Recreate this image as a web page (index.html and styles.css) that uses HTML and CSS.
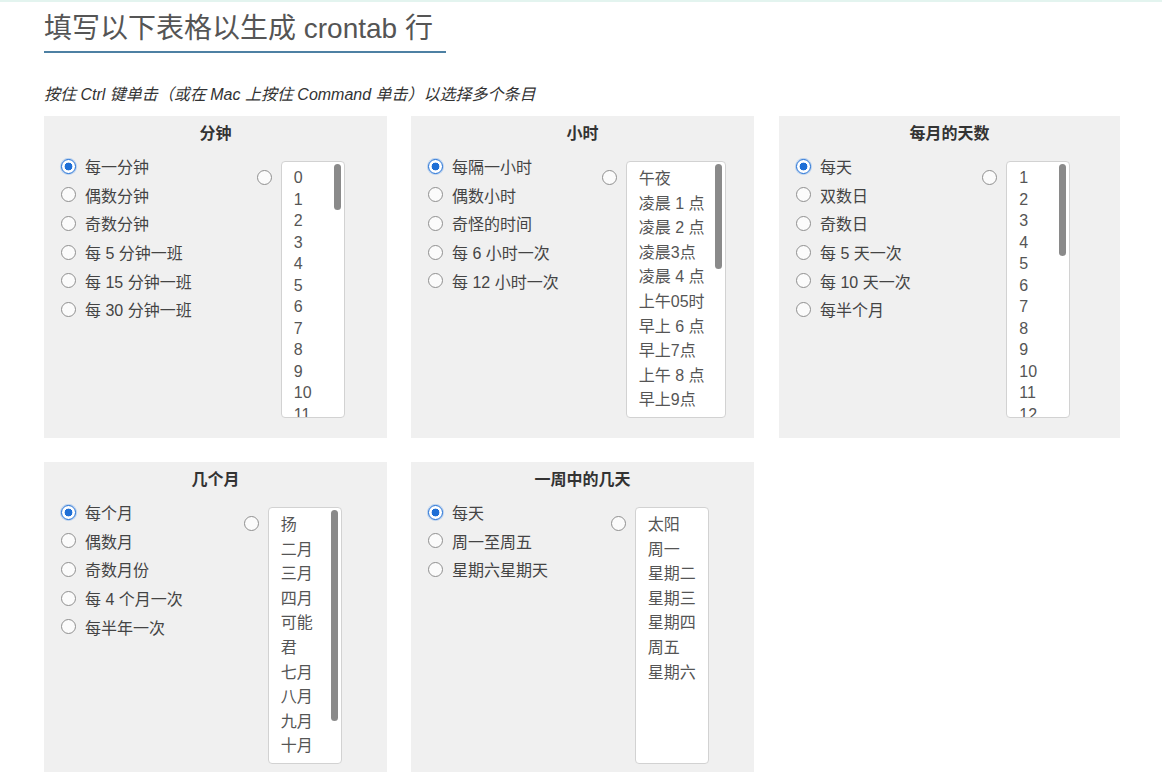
FILE: index.html
```html
<!DOCTYPE html>
<html lang="zh-CN">
<head>
<meta charset="utf-8">
<title>crontab 生成器</title>
<link rel="stylesheet" href="styles.css">
</head>
<body>
<div class="page">
  <h1 class="title">填写以下表格以生成 crontab 行</h1>
  <p class="hint">按住 Ctrl 键单击（或在 Mac 上按住 Command 单击）以选择多个条目</p>

  <div class="grid">
    <section class="panel">
      <h2 class="panel-title">分钟</h2>
      <div class="panel-body">
        <div class="choices">
          <label class="choice"><input type="radio" name="m" checked><span>每一分钟</span></label>
          <label class="choice"><input type="radio" name="m"><span>偶数分钟</span></label>
          <label class="choice"><input type="radio" name="m"><span>奇数分钟</span></label>
          <label class="choice"><input type="radio" name="m"><span>每 5 分钟一班</span></label>
          <label class="choice"><input type="radio" name="m"><span>每 15 分钟一班</span></label>
          <label class="choice"><input type="radio" name="m"><span>每 30 分钟一班</span></label>
        </div>
        <div class="pick pick-min">
          <div class="pick-group">
            <input type="radio" name="m" class="pick-radio">
            <div class="list-box w64">
              <div class="list list-num">
                <div>0</div><div>1</div><div>2</div><div>3</div><div>4</div><div>5</div><div>6</div><div>7</div><div>8</div><div>9</div>
                <div>10</div><div>11</div><div>12</div><div>13</div><div>14</div><div>15</div><div>16</div><div>17</div><div>18</div><div>19</div>
                <div>20</div><div>21</div><div>22</div><div>23</div><div>24</div><div>25</div><div>26</div><div>27</div><div>28</div><div>29</div>
                <div>30</div><div>31</div><div>32</div><div>33</div><div>34</div><div>35</div><div>36</div><div>37</div><div>38</div><div>39</div>
                <div>40</div><div>41</div><div>42</div><div>43</div><div>44</div><div>45</div><div>46</div><div>47</div><div>48</div><div>49</div>
                <div>50</div><div>51</div><div>52</div><div>53</div><div>54</div><div>55</div><div>56</div><div>57</div><div>58</div><div>59</div>
              </div>
              <span class="thumb thumb-min"></span>
            </div>
          </div>
        </div>
      </div>
    </section>

    <section class="panel">
      <h2 class="panel-title">小时</h2>
      <div class="panel-body">
        <div class="choices">
          <label class="choice"><input type="radio" name="h" checked><span>每隔一小时</span></label>
          <label class="choice"><input type="radio" name="h"><span>偶数小时</span></label>
          <label class="choice"><input type="radio" name="h"><span>奇怪的时间</span></label>
          <label class="choice"><input type="radio" name="h"><span>每 6 小时一次</span></label>
          <label class="choice"><input type="radio" name="h"><span>每 12 小时一次</span></label>
        </div>
        <div class="pick pick-hour">
          <div class="pick-group">
            <input type="radio" name="h" class="pick-radio">
            <div class="list-box w100">
              <div class="list list-cjk">
                <div>午夜</div><div>凌晨 1 点</div><div>凌晨 2 点</div><div>凌晨3点</div><div>凌晨 4 点</div><div>上午05时</div>
                <div>早上 6 点</div><div>早上7点</div><div>上午 8 点</div><div>早上9点</div><div>上午 10 点</div><div>上午 11 点</div>
                <div>中午</div><div>下午 1 点</div><div>下午 2 点</div><div>下午 3 点</div><div>下午 4 点</div><div>下午 5 点</div>
                <div>下午 6 点</div><div>晚上 7 点</div><div>晚上 8 点</div><div>晚上 9 点</div><div>晚上 10 点</div><div>晚上 11 点</div>
              </div>
              <span class="thumb thumb-hour"></span>
            </div>
          </div>
        </div>
      </div>
    </section>

    <section class="panel">
      <h2 class="panel-title">每月的天数</h2>
      <div class="panel-body">
        <div class="choices">
          <label class="choice"><input type="radio" name="d" checked><span>每天</span></label>
          <label class="choice"><input type="radio" name="d"><span>双数日</span></label>
          <label class="choice"><input type="radio" name="d"><span>奇数日</span></label>
          <label class="choice"><input type="radio" name="d"><span>每 5 天一次</span></label>
          <label class="choice"><input type="radio" name="d"><span>每 10 天一次</span></label>
          <label class="choice"><input type="radio" name="d"><span>每半个月</span></label>
        </div>
        <div class="pick">
          <div class="pick-group">
            <input type="radio" name="d" class="pick-radio">
            <div class="list-box w64">
              <div class="list list-num">
                <div>1</div><div>2</div><div>3</div><div>4</div><div>5</div><div>6</div><div>7</div><div>8</div><div>9</div><div>10</div>
                <div>11</div><div>12</div><div>13</div><div>14</div><div>15</div><div>16</div><div>17</div><div>18</div><div>19</div><div>20</div>
                <div>21</div><div>22</div><div>23</div><div>24</div><div>25</div><div>26</div><div>27</div><div>28</div><div>29</div><div>30</div>
                <div>31</div>
              </div>
              <span class="thumb thumb-day"></span>
            </div>
          </div>
        </div>
      </div>
    </section>

    <section class="panel">
      <h2 class="panel-title">几个月</h2>
      <div class="panel-body">
        <div class="choices">
          <label class="choice"><input type="radio" name="mo" checked><span>每个月</span></label>
          <label class="choice"><input type="radio" name="mo"><span>偶数月</span></label>
          <label class="choice"><input type="radio" name="mo"><span>奇数月份</span></label>
          <label class="choice"><input type="radio" name="mo"><span>每 4 个月一次</span></label>
          <label class="choice"><input type="radio" name="mo"><span>每半年一次</span></label>
        </div>
        <div class="pick">
          <div class="pick-group">
            <input type="radio" name="mo" class="pick-radio">
            <div class="list-box w74">
              <div class="list list-cjk">
                <div>扬</div><div>二月</div><div>三月</div><div>四月</div><div>可能</div><div>君</div>
                <div>七月</div><div>八月</div><div>九月</div><div>十月</div><div>十一月</div><div>十二月</div>
              </div>
              <span class="thumb thumb-month"></span>
            </div>
          </div>
        </div>
      </div>
    </section>

    <section class="panel">
      <h2 class="panel-title">一周中的几天</h2>
      <div class="panel-body">
        <div class="choices">
          <label class="choice"><input type="radio" name="w" checked><span>每天</span></label>
          <label class="choice"><input type="radio" name="w"><span>周一至周五</span></label>
          <label class="choice"><input type="radio" name="w"><span>星期六星期天</span></label>
        </div>
        <div class="pick">
          <div class="pick-group">
            <input type="radio" name="w" class="pick-radio">
            <div class="list-box w74">
              <div class="list list-cjk">
                <div>太阳</div><div>周一</div><div>星期二</div><div>星期三</div><div>星期四</div><div>周五</div><div>星期六</div>
              </div>
            </div>
          </div>
        </div>
      </div>
    </section>
  </div>
</div>
</body>
</html>
```

FILE: styles.css
```css
* {
  box-sizing: border-box;
}

html, body {
  margin: 0;
  padding: 0;
  background: #ffffff;
}

body {
  border-top: 2px solid #e3f4ef;
  font-family: "Liberation Sans", "Noto Sans CJK SC", sans-serif;
  font-size: 16px;
  color: #444;
}

.page {
  width: 1121px;
  padding-left: 44px;
}

.title {
  display: inline-block;
  margin: 9px 0 0 0;
  padding: 0 13px 4px 0;
  font-size: 28px;
  line-height: 36px;
  font-weight: normal;
  color: #555;
  border-bottom: 2px solid #4d80a3;
  white-space: nowrap;
}

.hint {
  margin: 32px 0 11px 0;
  font-size: 16px;
  line-height: 20px;
  font-style: italic;
  color: #333;
}

.grid {
  display: grid;
  grid-template-columns: 343px 343px 342px;
  column-gap: 24px;
  row-gap: 24px;
}

.grid .panel:nth-child(3) {
  margin-left: 1px;
}

.panel {
  background: #f0f0f0;
  padding: 8px 17px 20px 17px;
}

.panel-title {
  margin: 0;
  font-size: 16px;
  line-height: 20px;
  font-weight: bold;
  text-align: center;
  color: #333;
}

.panel-body {
  display: flex;
  margin-top: 8px;
}

.choices {
  width: 50%;
  display: flex;
  flex-direction: column;
}

.choice {
  display: flex;
  align-items: center;
  height: 28.6px;
  gap: 9px;
  color: #444;
  white-space: nowrap;
}

input[type="radio"] {
  -webkit-appearance: none;
  appearance: none;
  margin: 0;
  width: 15px;
  height: 15px;
  border-radius: 50%;
  border: 1px solid #8f8f8f;
  background: #fbfbfb;
  flex: none;
}

input[type="radio"]:checked {
  border: 1px solid #1f6fd6;
  background: radial-gradient(circle, #1f6fd6 0 3.6px, #ffffff 4.2px);
  box-shadow: 0 0 0 1px rgba(80, 150, 235, 0.35);
}

.pick {
  width: 50%;
  display: flex;
  justify-content: center;
  padding-top: 9px;
}

.pick-min {
  padding-left: 16px;
}

.pick-hour {
  padding-left: 8px;
}

.pick-group {
  display: flex;
  align-items: flex-start;
  gap: 9px;
}

.pick-radio {
  margin-top: 9px !important;
}

.list-box {
  position: relative;
  height: 257px;
  background: #fff;
  border: 1px solid #d2d2d2;
  border-radius: 4px;
  overflow: hidden;
}

.list {
  height: 100%;
  padding: 5px 0 0 12px;
  overflow: hidden;
  color: #555;
  white-space: nowrap;
}

.list-num {
  line-height: 21.5px;
}

.list-cjk {
  height: calc(100% - 4px);
  line-height: 24.6px;
}

.w64 { width: 64px; }
.w74 { width: 74px; }
.w100 { width: 100px; }

.thumb {
  position: absolute;
  top: 2px;
  right: 3px;
  width: 7px;
  border-radius: 4px;
  background: #8a8a8a;
}

.thumb-min { height: 46px; }
.thumb-hour { height: 105px; }
.thumb-day { height: 92px; }
.thumb-month { height: 211px; }
```
